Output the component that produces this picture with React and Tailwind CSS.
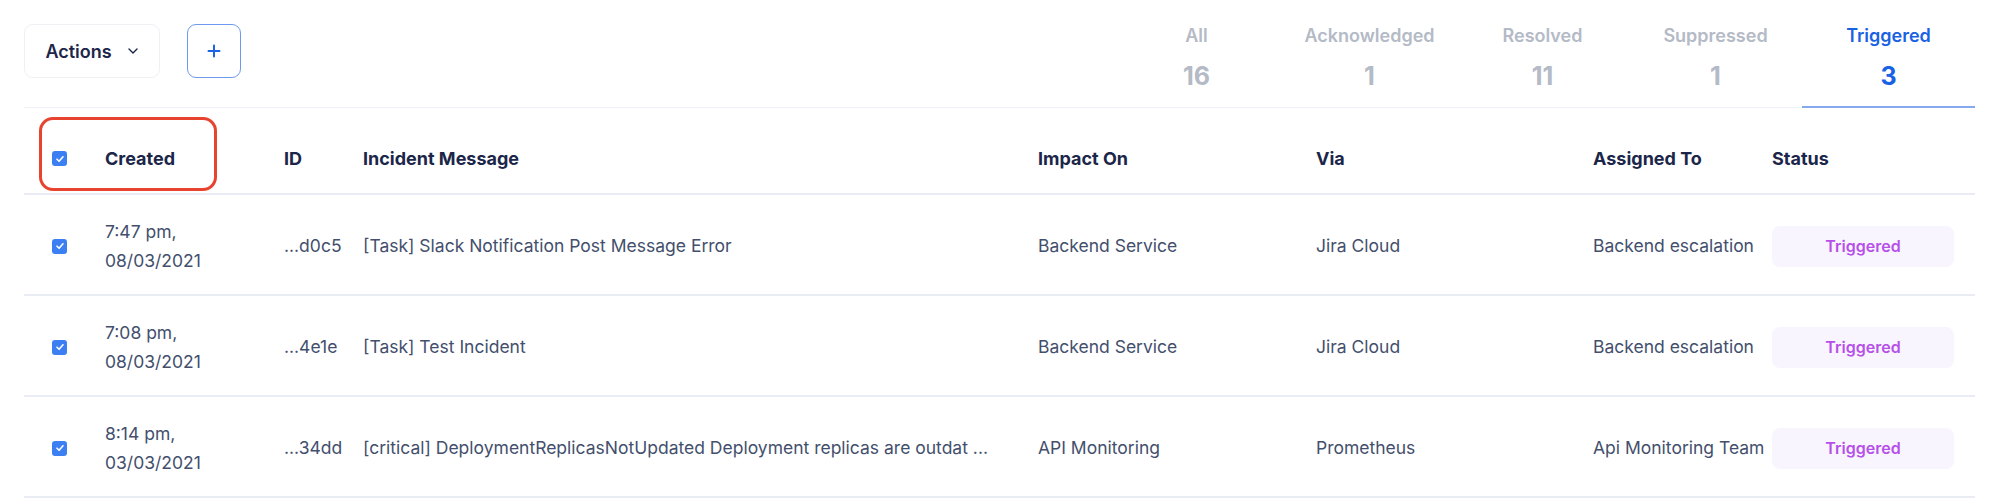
import React from "react";

const tabs = [
  { label: "All", count: 16 },
  { label: "Acknowledged", count: 1 },
  { label: "Resolved", count: 11 },
  { label: "Suppressed", count: 1 },
  { label: "Triggered", count: 3, active: true },
];

const incidents = [
  {
    time: "7:47 pm,",
    date: "08/03/2021",
    id: "...d0c5",
    message: "[Task] Slack Notification Post Message Error",
    impact: "Backend Service",
    via: "Jira Cloud",
    assigned: "Backend escalation",
  },
  {
    time: "7:08 pm,",
    date: "08/03/2021",
    id: "...4e1e",
    message: "[Task] Test Incident",
    impact: "Backend Service",
    via: "Jira Cloud",
    assigned: "Backend escalation",
  },
  {
    time: "8:14 pm,",
    date: "03/03/2021",
    id: "...34dd",
    message: "[critical] DeploymentReplicasNotUpdated Deployment replicas are outdat ...",
    impact: "API Monitoring",
    via: "Prometheus",
    assigned: "Api Monitoring Team",
  },
];

const cols = "grid grid-cols-[81px_179px_79px_675px_278px_277px_179px_202px] items-center";

const Checkbox = () => (
  <span className="w-[15px] h-[15px] rounded-[3px] bg-[#3b7ff2] flex items-center justify-center">
    <svg width="10" height="10" viewBox="0 0 10 10" fill="none">
      <path d="M2 5.2 L4.1 7.3 L8 2.8" stroke="white" strokeWidth="1.6" strokeLinecap="round" strokeLinejoin="round" />
    </svg>
  </span>
);

const App = () => {
  return (
    <div className="w-[1999px] h-[501px] bg-white px-[24px] font-['Inter',sans-serif] overflow-hidden">
      {/* toolbar + tabs */}
      <div className="flex justify-between border-b border-[#eef1f5] h-[108px]">
        <div className="flex items-start gap-[27px] pt-[24px]">
          <button className="h-[54px] w-[136px] border border-[#eef0f4] rounded-[9px] flex items-center justify-center gap-[15px] text-[18px] font-semibold text-[#1b2649]">
            Actions
            <svg width="12" height="8" viewBox="0 0 12 8" fill="none">
              <path d="M2 2 L6 6 L10 2" stroke="#1b2649" strokeWidth="1.4" strokeLinecap="round" strokeLinejoin="round" />
            </svg>
          </button>
          <button className="h-[54px] w-[54px] border border-[#6d9af0] rounded-[9px] flex items-center justify-center">
            <svg width="14" height="14" viewBox="0 0 14 14" fill="none">
              <path d="M7 1.5 V12.5 M1.5 7 H12.5" stroke="#1d63e6" strokeWidth="2" strokeLinecap="round" />
            </svg>
          </button>
        </div>
        <div className="flex">
          {tabs.map((tab) => (
            <div
              key={tab.label}
              className={
                tab.active
                  ? "w-[173px] flex flex-col items-center pt-[25px] border-b-2 border-[#86a9ee] -mb-px"
                  : "w-[173px] flex flex-col items-center pt-[25px]"
              }
            >
              <span className={tab.active ? "text-[18px] leading-[22px] font-semibold text-[#1a62e4]" : "text-[18px] leading-[22px] font-semibold text-[#b4bac6]"}>
                {tab.label}
              </span>
              <span className={tab.active ? "mt-[14px] text-[25px] leading-[30px] font-bold text-[#1a62e4]" : "mt-[14px] text-[25px] leading-[30px] font-bold text-[#b4bac6]"}>
                {tab.count}
              </span>
            </div>
          ))}
        </div>
      </div>

      {/* table header */}
      <div className={`${cols} relative h-[87px] pt-[16px] border-b-2 border-[#e9edf3] text-[18px] font-bold text-[#1b2649]`}>
        <div className="pl-[28px]">
          <Checkbox />
        </div>
        <div>Created</div>
        <div>ID</div>
        <div>Incident Message</div>
        <div>Impact On</div>
        <div>Via</div>
        <div>Assigned To</div>
        <div>Status</div>
        {/* highlight box */}
        <div className="absolute left-[15px] top-[9px] w-[178px] h-[74px] border-[3px] border-[#e8432f] rounded-[14px]"></div>
      </div>

      {/* rows */}
      {incidents.map((item, index) => (
        <div key={index} className={`${cols} h-[101px] pt-[3px] border-b-2 border-[#e9edf3] text-[17.5px] text-[#434f6d]`}>
          <div className="pl-[28px]">
            <Checkbox />
          </div>
          <div className="leading-[29px]">
            <div>{item.time}</div>
            <div>{item.date}</div>
          </div>
          <div>{item.id}</div>
          <div className="whitespace-nowrap">{item.message}</div>
          <div>{item.impact}</div>
          <div>{item.via}</div>
          <div className="whitespace-nowrap">{item.assigned}</div>
          <div>
            <span className="w-[182px] h-[41px] rounded-[8px] bg-[#f8f5fe] flex items-center justify-center text-[16px] font-semibold text-[#b650e9]">
              Triggered
            </span>
          </div>
        </div>
      ))}
    </div>
  );
};

export default App;
